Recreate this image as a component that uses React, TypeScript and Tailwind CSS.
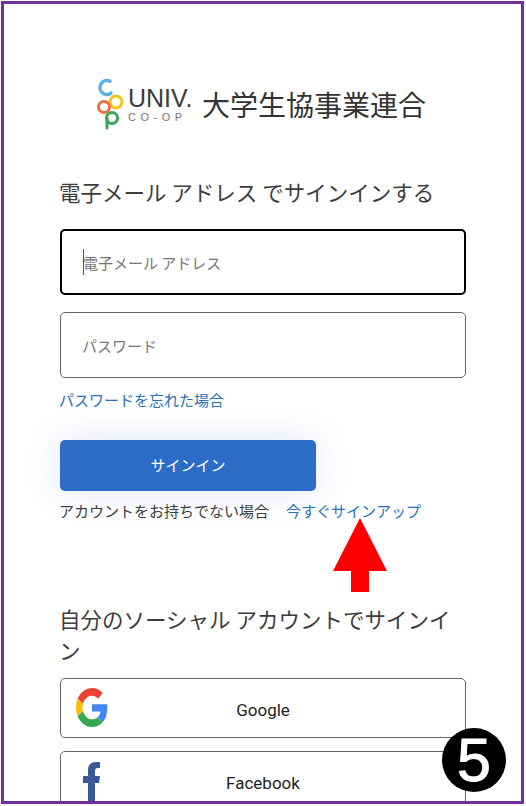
const font = "[font-family:'Noto_Sans_CJK_JP','Noto_Sans',sans-serif]"

function CoopMark() {
  return (
    <svg width="28" height="52" viewBox="0 0 28 52" fill="none" className="shrink-0">
      <path d="M14 3.200a7 7 0 1 0 1 12" stroke="#5bb2e0" strokeWidth="3.500" strokeLinecap="round" />
      <circle cx="20" cy="24" r="6" stroke="#f2c318" strokeWidth="3" />
      <circle cx="8" cy="29" r="5.500" stroke="#e8743a" strokeWidth="3" />
      <circle cx="16" cy="40" r="5.500" stroke="#3aa655" strokeWidth="3" />
      <path d="M11 40v10" stroke="#3aa655" strokeWidth="3" strokeLinecap="round" />
    </svg>
  )
}

function GoogleIcon() {
  return (
    <svg width="32" height="39" viewBox="0 0 48 48" preserveAspectRatio="none" className="block">
      <path fill="#EA4335" d="M24 9.500c3.500 0 6.700 1.200 9.200 3.600l6.900-6.900C35.900 2.400 30.500 0 24 0 14.600 0 6.500 5.400 2.600 13.200l8 6.200C12.400 13.700 17.700 9.500 24 9.500z" />
      <path fill="#4285F4" d="M47 24.500c0-1.600-.1-3.100-.4-4.500H24v9h12.900c-.6 3-2.200 5.500-4.700 7.200l7.700 6C44.400 38 47 31.800 47 24.500z" />
      <path fill="#FBBC05" d="M10.500 28.600c-.5-1.400-.8-3-.8-4.600s.3-3.200.8-4.600l-8-6.200C.9 16.500 0 20.100 0 24s.9 7.500 2.600 10.800l7.900-6.200z" />
      <path fill="#34A853" d="M24 48c6.500 0 11.900-2.100 15.900-5.800l-7.700-6c-2.200 1.400-4.900 2.300-8.200 2.300-6.300 0-11.600-4.200-13.500-9.900l-8 6.200C6.500 42.600 14.600 48 24 48z" />
    </svg>
  )
}

function SocialButton({ label, icon, iconClass }: { label: string; icon: React.ReactNode; iconClass: string }) {
  return (
    <button className="relative flex h-[60px] w-[406px] shrink-0 items-center justify-center rounded-[5px] border border-[#666] bg-white text-[17px] text-[#222]">
      <span className={`absolute ${iconClass}`}>{icon}</span>
      <span className="pt-[5px] [font-family:Roboto,sans-serif]">{label}</span>
    </button>
  )
}

export default function App() {
  return (
    <div className="h-[806px] w-[526px] bg-white pb-[2px] pl-px pr-[2px] pt-px">
      <div className={`relative h-full overflow-hidden border-[3px] border-[#7030a0] bg-white ${font}`}>
        <div className="flex flex-col px-[56px] pt-[74px]">
          <div className="flex h-[52px] shrink-0 items-center pl-[36px]">
            <CoopMark />
            <div className="ml-[4px] mr-[11px] flex w-[64px] flex-col text-[#3b3b3b] [font-family:'Liberation_Sans',sans-serif]">
              <span className="whitespace-nowrap text-[25px] leading-[22px]">UNIV.</span>
              <span className="mt-[3px] whitespace-nowrap text-[11px] leading-[10px] tracking-[4.500px] text-[#777]">CO-OP</span>
            </div>
            <span className="-ml-[1px] whitespace-nowrap text-[28px] leading-none text-[#333]">大学生協事業連合</span>
          </div>

          <h1 className="-ml-[1px] mt-[46px] whitespace-nowrap text-[21.500px] font-normal leading-[32px] text-[#3d3d3d]">電子メール アドレス でサインインする</h1>

          <div className="relative mt-[21px]">
            <input
              readOnly
              placeholder="電子メール アドレス"
              className="block h-[66px] w-[406px] rounded-[5px] border-[2px] border-black bg-white pl-[21px] text-[15px] outline-none placeholder:text-[#777]"
            />
            <span className="absolute left-[23px] top-[20px] h-[26px] w-px bg-[#555]" />
          </div>
          <input
            readOnly
            placeholder="パスワード"
            className="mt-[17px] block h-[66px] w-[406px] shrink-0 rounded-[5px] border border-[#666] bg-white pl-[21px] text-[15px] outline-none placeholder:text-[#777]"
          />
          <a className="-ml-[1px] mt-[11px] block text-[15px] leading-[22px] text-[#2b6fb8]">パスワードを忘れた場合</a>

          <button className="mt-[29px] h-[51px] w-[256px] shrink-0 rounded-[5px] bg-[#2b6dc6] text-[15px] text-white shadow-[0_0_36px_rgba(43,80,198,0.14)]">サインイン</button>

          <p className="-ml-[1px] mt-[9px] flex whitespace-nowrap text-[15px] leading-[22px] text-[#3d3d3d]">
            <span>アカウントをお持ちでない場合</span>
            <a className="ml-[17px] text-[#2b6fb8]">今すぐサインアップ</a>
          </p>

          <h2 className="-ml-[1px] mt-[81px] text-[21.500px] font-normal leading-[31px] text-[#3d3d3d]">自分のソーシャル アカウントでサインイン</h2>

          <div className="mt-[13px] flex flex-col gap-[13px]">
            <SocialButton label="Google" icon={<GoogleIcon />} iconClass="left-[15px] top-[9px]" />
            <SocialButton
              label="Facebook"
              iconClass="left-[22px] top-[10px]"
              icon={
                <svg width="17" height="44" viewBox="0 0 17 44" className="block">
                  <path fill="#3b5998" d="M5 44V21H0v-7h5V8C5 3 8 0 13 0h4v6h-2c-2 0-3 1-3 3v5h5l-1 7h-4v23z" />
                </svg>
              }
            />
          </div>
        </div>

        <svg width="54" height="74" viewBox="0 0 54 74" className="absolute left-[329px] top-[514px]">
          <path fill="#ff0000" d="M27 0 54 53H36v21H18V53H0z" />
        </svg>

        <div className="absolute left-[438px] top-[724px] flex h-[64px] w-[64px] items-center justify-center rounded-full bg-black text-[61px] font-normal leading-none text-white [-webkit-text-stroke:1px_white] [font-family:'Liberation_Sans',sans-serif]">5</div>
      </div>
    </div>
  )
}
